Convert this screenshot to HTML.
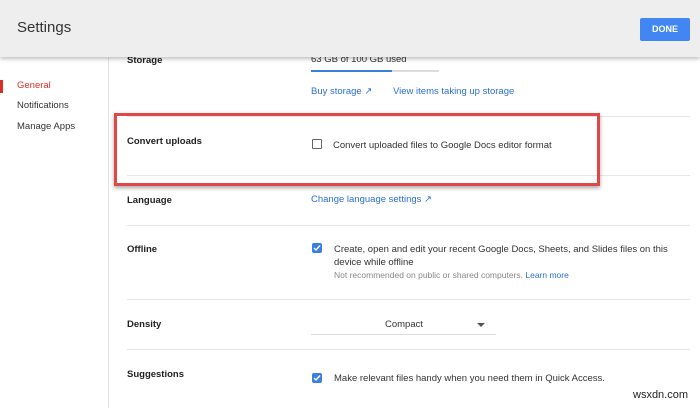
<!DOCTYPE html>
<html><head><style>
body{margin:0;width:700px;height:408px;overflow:hidden;background:#fff;font-family:"Liberation Sans",sans-serif;position:relative;color:#333}
.a{position:absolute;white-space:nowrap}
.hdr{position:absolute;left:0;top:0;width:700px;height:57px;background:#eeeeee;box-shadow:0 2px 4px rgba(0,0,0,.25);z-index:2}
.lbl{font-size:9.5px;font-weight:bold;color:#222}
.t{font-size:9.5px;color:#333}
.lk{font-size:9.5px;color:#2a6fd6}
.sep{position:absolute;left:127px;width:563px;height:1px;background:#e6e6e6}
.cb{position:absolute;width:10px;height:10px;border-radius:2px;background:#3d7fe0}
.cb svg{position:absolute;left:1px;top:1px}
</style></head><body>
<div class="hdr">
<div class="a" style="left:17px;top:19px;font-size:15px;color:#333">Settings</div>
<div class="a" style="left:640px;top:18px;width:50px;height:23px;background:#4286f4;border-radius:2px;color:#fff;font-size:9px;font-weight:bold;text-align:center;line-height:23px">DONE</div>
</div>
<div class="a" style="left:108px;top:57px;width:1px;height:351px;background:#e3e3e3"></div>
<div class="a" style="left:0;top:80px;width:3px;height:13px;background:#d93025"></div>
<div class="a" style="left:17px;top:80px;font-size:9.5px;color:#d93025">General</div>
<div class="a" style="left:17px;top:100px;font-size:9.5px;color:#333">Notifications</div>
<div class="a" style="left:17px;top:121px;font-size:9.5px;color:#333">Manage Apps</div>

<div class="a lbl" style="left:127px;top:55px">Storage</div>
<div class="a t" style="left:311px;top:54px">63 GB of 100 GB used</div>
<div class="a" style="left:311px;top:70px;width:128px;height:2px;background:#ddd"></div>
<div class="a" style="left:311px;top:70px;width:81px;height:2px;background:#3d7fe0"></div>
<div class="a lk" style="left:311px;top:86px">Buy storage ↗</div>
<div class="a lk" style="left:393px;top:86px">View items taking up storage</div>
<div class="sep" style="top:116px"></div>

<div class="a lbl" style="left:127px;top:136px">Convert uploads</div>
<div class="a" style="left:312px;top:139px;width:8px;height:8px;border:1.5px solid #666;border-radius:1px"></div>
<div class="a t" style="left:333px;top:140px">Convert uploaded files to Google Docs editor format</div>
<div class="sep" style="top:175px"></div>
<div class="a" style="left:114px;top:113px;width:480px;height:67px;border:3px solid #e04848;box-shadow:0 2px 4px rgba(0,0,0,.35)"></div>

<div class="a lbl" style="left:127px;top:195px">Language</div>
<div class="a lk" style="left:311px;top:194px">Change language settings ↗</div>
<div class="sep" style="top:225px"></div>

<div class="a lbl" style="left:127px;top:244px">Offline</div>
<div class="cb" style="left:312px;top:243px"><svg width="8" height="8" viewBox="0 0 8 8"><path d="M1 4l2 2 4-4.5" stroke="#fff" stroke-width="1.4" fill="none"/></svg></div>
<div class="a t" style="left:334px;top:244px">Create, open and edit your recent Google Docs, Sheets, and Slides files on this</div>
<div class="a t" style="left:334px;top:257px">device while offline</div>
<div class="a" style="left:334px;top:270px;font-size:8.5px;color:#888">Not recommended on public or shared computers. <span style="color:#2a6fd6">Learn more</span></div>
<div class="sep" style="top:299px"></div>

<div class="a lbl" style="left:127px;top:319px">Density</div>
<div class="a t" style="left:385px;top:319px">Compact</div>
<div class="a" style="left:477px;top:323px;width:0;height:0;border-left:4px solid transparent;border-right:4px solid transparent;border-top:4px solid #555"></div>
<div class="a" style="left:311px;top:334px;width:185px;height:1px;background:#ddd"></div>
<div class="sep" style="top:349px"></div>

<div class="a lbl" style="left:127px;top:369px">Suggestions</div>
<div class="cb" style="left:312px;top:373px"><svg width="8" height="8" viewBox="0 0 8 8"><path d="M1 4l2 2 4-4.5" stroke="#fff" stroke-width="1.4" fill="none"/></svg></div>
<div class="a t" style="left:334px;top:373px">Make relevant files handy when you need them in Quick Access.</div>
<div class="a" style="left:633px;top:389px;font-size:11px;color:#222">wsxdn.com</div>
</body></html>
